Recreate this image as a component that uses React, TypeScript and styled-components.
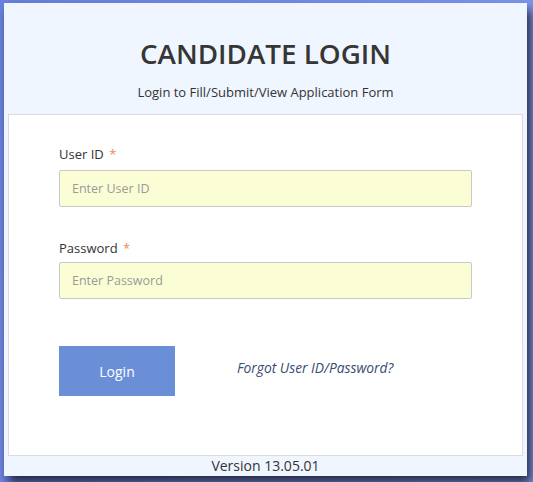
import React, { FC } from 'react';
import styled, { createGlobalStyle } from 'styled-components';

const GlobalStyle = createGlobalStyle`
	html, body {
		margin: 0;
		padding: 0;
	}

	body {
		width: 533px;
		height: 482px;
		overflow: hidden;
		background: linear-gradient(100deg, #6a82e0 0%, #7a91ea 60%, #8299ee 100%);
		font-family: 'Open Sans', 'Liberation Sans', sans-serif;
		color: #333;
	}
`;

const fields = [
	{ name: 'userId', label: 'User ID', placeholder: 'Enter User ID', type: 'text' },
	{ name: 'password', label: 'Password', placeholder: 'Enter Password', type: 'password' },
];

const App: FC = () => {
	return (
		<>
			<GlobalStyle />
			<Panel>
				<Header>
					<Title>CANDIDATE LOGIN</Title>
					<Subtitle>Login to Fill/Submit/View Application Form</Subtitle>
				</Header>

				<Card>
					<form noValidate onSubmit={(e) => e.preventDefault()}>
						{fields.map((f, i) => (
							<Field key={f.name} first={i === 0}>
								<Label htmlFor={f.name} tight={i > 0}>
									{f.label} <Required>*</Required>
								</Label>
								<Input id={f.name} name={f.name} type={f.type} placeholder={f.placeholder} />
							</Field>
						))}

						<Actions>
							<LoginButton type="submit">Login</LoginButton>
							<ForgotLink href="#">Forgot User ID/Password?</ForgotLink>
						</Actions>
					</form>
				</Card>

				<Footer>Version 13.05.01</Footer>
			</Panel>
		</>
	);
};

export default App;

const Panel = styled.div`
	width: 523px;
	height: 473px;
	margin: 3px 0 0 4px;
	background-color: #f0f6ff;
	box-shadow: 4px 7px 10px rgba(28, 30, 48, 0.9);
	display: flex;
	flex-direction: column;
`;

const Header = styled.div`
	padding-top: 31px;
	text-align: center;
`;

const Title = styled.h1`
	margin: 0;
	font-size: 27.8px;
	line-height: 39px;
	font-weight: 600;
	color: #363636;
`;

const Subtitle = styled.p`
	margin: 10px 0 13px;
	font-size: 13px;
	line-height: 18px;
	color: #333;
`;

const Card = styled.div`
	margin: 0 4px;
	height: 342px;
	box-sizing: border-box;
	background-color: #fff;
	border: 1px solid #dcdcdc;
	padding: 30px 0 0 50px;
`;

const Field = styled.div<{ first?: boolean }>`
	margin-top: ${(p) => (p.first ? '0' : '32px')};
`;

const Label = styled.label<{ tight?: boolean }>`
	display: block;
	font-size: 13px;
	line-height: 18px;
	color: #333;
	margin-bottom: ${(p) => (p.tight ? '5px' : '7px')};
`;

const Required = styled.span`
	color: #ec8a5a;
	margin-left: 2px;
`;

const Input = styled.input`
	display: block;
	box-sizing: border-box;
	width: 413px;
	height: 37px;
	padding: 0 12px;
	background-color: #fbfdd5;
	border: 1px solid #c9c9c9;
	border-radius: 2px;
	font-family: 'Open Sans', 'Liberation Sans', sans-serif;
	font-size: 12.5px;
	color: #333;
	outline: none;

	&::placeholder {
		color: #9a9a9a;
	}
`;

const Actions = styled.div`
	display: flex;
	align-items: flex-start;
	gap: 62px;
	margin-top: 47px;
`;

const LoginButton = styled.button`
	width: 116px;
	height: 50px;
	border: none;
	background-color: #6a8fd6;
	color: #fff;
	font-family: 'Open Sans', 'Liberation Sans', sans-serif;
	font-size: 14px;
	cursor: pointer;
`;

const ForgotLink = styled.a`
	margin-top: 13px;
	font-size: 13.8px;
	line-height: 18px;
	font-style: italic;
	color: #3a4b72;
	text-decoration: none;
`;

const Footer = styled.div`
	text-align: center;
	font-size: 14px;
	line-height: 20px;
	color: #333;
`;
